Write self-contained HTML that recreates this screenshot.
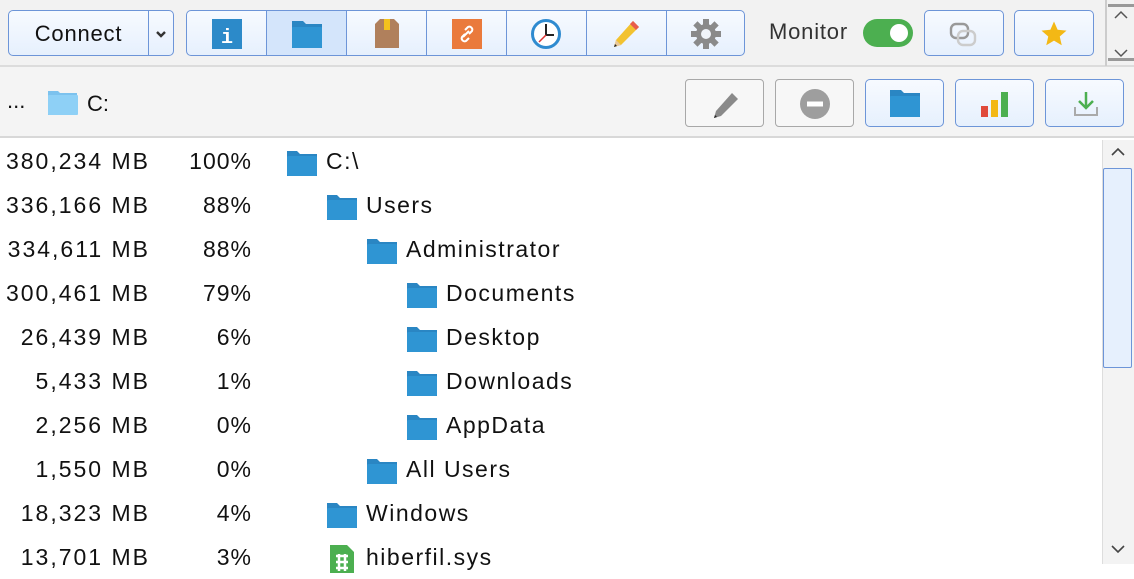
<!DOCTYPE html>
<html><head><meta charset="utf-8"><style>
*{box-sizing:border-box;margin:0;padding:0}
body{width:1134px;height:564px;overflow:hidden;background:#fff;font-family:"Liberation Sans",sans-serif;color:#111;position:relative}
.abs{position:absolute}
.top{left:0;top:0;width:1134px;height:67px;background:#f2f2f2;border-bottom:2px solid #dcdcdc}
.bar2{left:0;top:67px;width:1134px;height:71px;background:#f4f4f4;border-bottom:2px solid #d8d8d8}
.btn{position:absolute;border:1px solid #6d95d8;border-radius:5px;background:linear-gradient(#f7faff,#e6f0fd)}
.gbtn{position:absolute;border:1px solid #a8a8a8;border-radius:4px;background:#f7f7f7}
.seg{position:absolute;top:0;height:100%;border-left:1px solid #6d95d8}
.row{position:absolute;left:0;height:44px;font-size:23px;letter-spacing:1.5px;line-height:44px;width:1100px}
.sz{position:absolute;right:950px;top:0;white-space:nowrap;letter-spacing:2px}
.pc{position:absolute;right:848px;top:0;letter-spacing:1px}
.nm{position:absolute;top:0;white-space:nowrap}
.fi{position:absolute;top:10px}
</style></head><body>
<div class="abs top"></div>
<div class="btn" style="left:8px;top:10px;width:166px;height:46px">
 <div style="position:absolute;left:0;width:139px;text-align:center;top:10px;font-size:22px;letter-spacing:.8px">Connect</div>
 <div class="seg" style="left:139px"></div>
 <svg class="abs" style="left:146px;top:18px" width="12" height="10"><path d="M2 3 L6 7 L10 3" stroke="#333" stroke-width="2.4" fill="none"/></svg>
</div>
<div class="btn" style="left:186px;top:10px;width:559px;height:46px;overflow:hidden">
 <div class="abs" style="left:79px;top:0;width:80px;height:46px;background:#d4e5fb"></div>
 <div class="seg" style="left:79px"></div><div class="seg" style="left:159px"></div><div class="seg" style="left:239px"></div><div class="seg" style="left:319px"></div><div class="seg" style="left:399px"></div><div class="seg" style="left:479px"></div>
 <svg class="abs" style="left:24px;top:7px" width="32" height="32"><rect x="1" y="1" width="30" height="30" fill="#2c8ac9"/><text x="16" y="25" font-family="Liberation Mono" font-weight="bold" font-size="20" fill="#fff" text-anchor="middle">i</text></svg>
 <svg class="abs" style="left:103px;top:7px" width="34" height="32"><path d="M2 3 H13 L16 6 H32 V30 H2 Z" fill="#2a86c3"/><rect x="2" y="9" width="30" height="21" rx="1" fill="#2f95d3"/></svg>
 <svg class="abs" style="left:184px;top:7px" width="32" height="32"><path d="M4 6 L9 1 H23 L28 6 V30 H4 Z" fill="#b0805c"/><rect x="13" y="1" width="6" height="11" fill="#f3c21d"/></svg>
 <svg class="abs" style="left:264px;top:7px" width="32" height="32"><rect x="1" y="1" width="30" height="30" fill="#ea7a3c"/><path d="M12 19 l6-6 M14 12 l3-3 a3 3 0 0 1 4 4 l-3 3 M18 20 l-3 3 a3 3 0 0 1-4-4 l3-3" stroke="#fff" stroke-width="2" fill="none"/></svg>
 <svg class="abs" style="left:343px;top:7px" width="32" height="32"><circle cx="16" cy="16" r="13.5" fill="#fff" stroke="#2f8bd0" stroke-width="3"/><path d="M16 6 V17 H24" stroke="#222" stroke-width="2" fill="none"/><path d="M16 17 L9 24" stroke="#d33" stroke-width="1.5"/></svg>
 <svg class="abs" style="left:424px;top:7px" width="32" height="32"><path d="M22 3 L28 9 L10 27 L3 29 L5 22 Z" fill="#f2c230"/><path d="M22 3 L28 9 L25 12 L19 6 Z" fill="#e85c4c"/><path d="M5 22 L10 27 L3 29 Z" fill="#e8c89a"/><path d="M3 29 L4 26 L6 28Z" fill="#222"/></svg>
 <svg class="abs" style="left:503px;top:7px" width="32" height="32" viewBox="0 0 32 32"><g fill="#8a8a8a"><circle cx="16" cy="16" r="10"/><rect x="13" y="1" width="6" height="30"/><rect x="1" y="13" width="30" height="6"/><g transform="rotate(45 16 16)"><rect x="13" y="1" width="6" height="30"/><rect x="1" y="13" width="30" height="6"/></g></g><circle cx="16" cy="16" r="5" fill="#f0f4fa"/></svg>
</div>
<div class="abs" style="left:769px;top:19px;font-size:22px;color:#333;letter-spacing:.8px">Monitor</div>
<div class="abs" style="left:863px;top:19px;width:50px;height:28px;border-radius:14px;background:#4caf50"><div class="abs" style="left:27px;top:5px;width:18px;height:18px;border-radius:9px;background:#fff"></div></div>
<div class="btn" style="left:924px;top:10px;width:80px;height:46px"><svg class="abs" style="left:23px;top:6px" width="34" height="34"><rect x="3" y="7" width="17" height="14" rx="5" fill="none" stroke="#999" stroke-width="2.4"/><rect x="10" y="14" width="17" height="14" rx="5" fill="none" stroke="#ccc" stroke-width="2.4"/></svg></div>
<div class="btn" style="left:1014px;top:10px;width:80px;height:46px"><svg class="abs" style="left:24px;top:8px" width="30" height="30" viewBox="0 0 24 24"><path d="M12 2 L14.9 8.6 L22 9.3 L16.6 14 L18.2 21 L12 17.3 L5.8 21 L7.4 14 L2 9.3 L9.1 8.6 Z" fill="#f3b815"/></svg></div>
<div class="abs" style="left:1105px;top:0;width:2px;height:66px;background:#ccc"></div>
<div class="abs" style="left:1108px;top:4px;width:26px;height:3px;background:#999"></div>
<svg class="abs" style="left:1113px;top:10px" width="16" height="10"><path d="M2 8 L8 2 L14 8" stroke="#555" stroke-width="1.5" fill="none"/></svg>
<svg class="abs" style="left:1113px;top:48px" width="16" height="10"><path d="M2 2 L8 8 L14 2" stroke="#555" stroke-width="1.5" fill="none"/></svg>
<div class="abs" style="left:1108px;top:58px;width:26px;height:3px;background:#999"></div>

<div class="abs bar2"></div>
<div class="abs" style="left:7px;top:88px;font-size:22px">...</div>
<svg class="abs" style="left:47px;top:89px" width="32" height="27"><path d="M1 2 H11 L13 4 H30 V26 H1 Z" fill="#7cc2ee"/><rect x="1" y="6" width="30" height="20" rx="1" fill="#8ed0f6"/></svg>
<div class="abs" style="left:87px;top:91px;font-size:22px">C:</div>
<div class="gbtn" style="left:685px;top:79px;width:79px;height:48px"><svg class="abs" style="left:25px;top:10px" width="30" height="30"><path d="M21 3 L27 9 L10 26 L3 28 L5 21 Z" fill="#8a8a8a"/><path d="M3 28 L4 25 L6 27Z" fill="#222"/></svg></div>
<div class="gbtn" style="left:775px;top:79px;width:79px;height:48px"><svg class="abs" style="left:23px;top:8px" width="32" height="32"><circle cx="16" cy="16" r="15" fill="#9e9e9e"/><rect x="8" y="13.5" width="16" height="5" fill="#fff"/></svg></div>
<div class="btn" style="left:865px;top:79px;width:79px;height:48px"><svg class="abs" style="left:23px;top:9px" width="32" height="30"><path d="M1 1 H12 L15 4 H31 V28 H1 Z" fill="#2a86c3"/><rect x="1" y="7" width="30" height="21" rx="1" fill="#2f95d3"/></svg></div>
<div class="btn" style="left:955px;top:79px;width:79px;height:48px"><svg class="abs" style="left:23px;top:10px" width="32" height="28"><rect x="2" y="16" width="7" height="11" fill="#e04a3b"/><rect x="12" y="10" width="7" height="17" fill="#f3b815"/><rect x="22" y="2" width="7" height="25" fill="#4caf50"/></svg></div>
<div class="btn" style="left:1045px;top:79px;width:79px;height:48px"><svg class="abs" style="left:27px;top:10px" width="26" height="28"><path d="M13 2 V18 M6 11 L13 18 L20 11" stroke="#4caf50" stroke-width="2.5" fill="none"/><path d="M2 17 V25 H24 V17" stroke="#aaa" stroke-width="2" fill="none"/></svg></div>

<div class="abs" style="left:1102px;top:140px;width:32px;height:424px;background:#f3f3f3;border-left:1px solid #ddd"></div>
<svg class="abs" style="left:1110px;top:147px" width="16" height="10"><path d="M2 8 L8 2 L14 8" stroke="#444" stroke-width="1.6" fill="none"/></svg>
<div class="abs" style="left:1103px;top:168px;width:29px;height:200px;border:1px solid #6d95d8;border-radius:2px;background:#e6f0fd"></div>
<svg class="abs" style="left:1110px;top:544px" width="16" height="10"><path d="M2 2 L8 8 L14 2" stroke="#444" stroke-width="1.6" fill="none"/></svg>

<div id="rows"></div>
<script>
var d=[["380,234 MB","100%",0,"C:\\"],["336,166 MB","88%",1,"Users"],["334,611 MB","88%",2,"Administrator"],["300,461 MB","79%",3,"Documents"],["26,439 MB","6%",3,"Desktop"],["5,433 MB","1%",3,"Downloads"],["2,256 MB","0%",3,"AppData"],["1,550 MB","0%",2,"All Users"],["18,323 MB","4%",1,"Windows"],["13,701 MB","3%",1,"hiberfil.sys",1]];
var h="";d.forEach(function(r,i){var x=286+40*r[2];var ic=r[4]?'<svg class="fi" style="left:'+(x+4)+'px" width="24" height="28"><path d="M0 0 H17 L24 7 V28 H0 Z" fill="#4caf50"/><path d="M6 11 H18 M6 17 H18 M6 23 H18 M9 9 V26 M15 9 V26" stroke="#fff" stroke-width="2.5"/></svg>':'<svg class="fi" style="left:'+x+'px" width="32" height="28"><path d="M1 2 H11 L14 5 H31 V27 H1 Z" fill="#2a86c3"/><rect x="1" y="7" width="30" height="20" rx="1.5" fill="#2f95d3"/></svg>';
h+='<div class="row" style="top:'+(139+44*i)+'px"><span class="sz">'+r[0]+'</span><span class="pc">'+r[1]+'</span>'+ic+'<span class="nm" style="left:'+(x+40)+'px">'+r[3]+'</span></div>';});
document.getElementById("rows").innerHTML=h;
</script>
</body></html>
